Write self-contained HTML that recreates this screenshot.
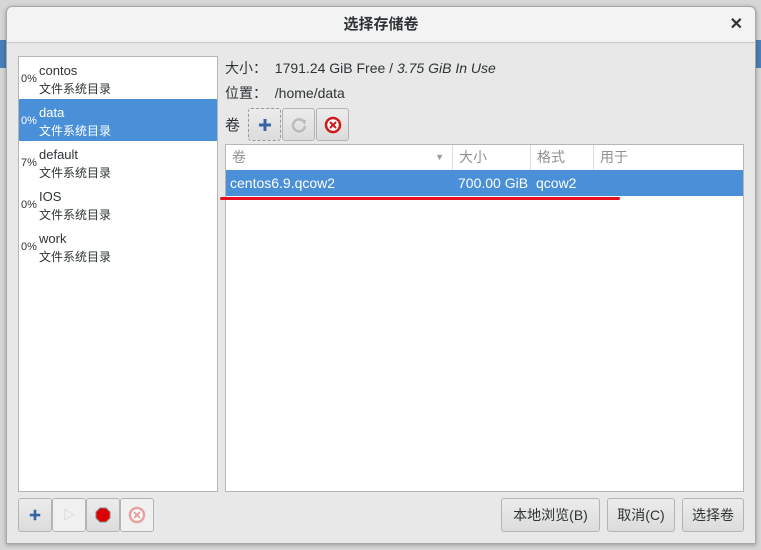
<!DOCTYPE html>
<html><head><meta charset="utf-8"><style>
*{margin:0;padding:0;box-sizing:border-box}
body{width:761px;height:550px;background:#d6d6d6;position:relative;overflow:hidden;font-family:"Liberation Sans","Noto Sans CJK SC",sans-serif;font-size:13px;color:#2e3436}
.abs{position:absolute}
.dlg{left:6px;top:6px;width:750px;height:538px;background:#e8e8e8;border:1px solid #a8a8a8;border-radius:6px 6px 0 0;box-shadow:0 1px 4px rgba(0,0,0,.3)}
.title{left:0;top:0;width:748px;height:36px;background:#f3f3f3;border-bottom:1px solid #c8c8c8;border-radius:6px 6px 0 0;text-align:center;line-height:36px;font-weight:bold;font-size:15px;color:#2e3436}
.list{background:#fff;border:1px solid #b6b6b6}
.row{position:absolute;left:0;width:198px;height:42px}
.row .p{position:absolute;left:2px;top:16px;font-size:11px}
.row .n{position:absolute;left:20px;top:6px;font-size:13px}
.row .d{position:absolute;left:20px;top:23px;font-size:12px}
.sel{background:#4a90d9;color:#fff}
.btn{position:absolute;border:1px solid #b4b4b4;border-radius:3px;background:linear-gradient(#ececec,#dcdcdc);text-align:center;line-height:32px;font-size:14px}
.hdr{position:absolute;top:0;height:25px;line-height:25px;color:#919191;font-size:14px;border-right:1px solid #dcdcdc;padding-left:6px}
</style></head><body>
<div class="abs" style="left:0;top:40px;width:6px;height:28px;background:#4a7fb8"></div>
<div class="abs" style="right:0;top:40px;width:6px;height:28px;background:#4a7fb8"></div>
<div class="abs dlg">
<div class="abs title">选择存储卷<span style="position:absolute;right:12px;top:0;font-size:16px">✕</span></div>
</div>
<div class="abs list" style="left:18px;top:56px;width:200px;height:436px">
<div class="row" style="top:0"><span class="p">0%</span><span class="n">contos</span><span class="d">文件系统目录</span></div>
<div class="row sel" style="top:42px"><span class="p">0%</span><span class="n">data</span><span class="d">文件系统目录</span></div>
<div class="row" style="top:84px"><span class="p">7%</span><span class="n">default</span><span class="d">文件系统目录</span></div>
<div class="row" style="top:126px"><span class="p">0%</span><span class="n">IOS</span><span class="d">文件系统目录</span></div>
<div class="row" style="top:168px"><span class="p">0%</span><span class="n">work</span><span class="d">文件系统目录</span></div>
</div>
<div class="abs" style="left:225px;top:58px;font-size:14px">大小：&nbsp; 1791.24 GiB Free / <i>3.75 GiB In Use</i></div>
<div class="abs" style="left:225px;top:83px;font-size:14px">位置：&nbsp; /home/data</div>
<div class="abs" style="left:225px;top:114px;font-size:15px">卷</div>
<div class="btn" style="left:248px;top:108px;width:33px;height:33px;border-style:dashed;border-color:#999"><svg width="16" height="16" viewBox="0 0 16 16" style="margin-top:8px"><path d="M8 2v12M2 8h12" stroke="#3565a4" stroke-width="3"/></svg></div>
<div class="btn" style="left:282px;top:108px;width:33px;height:33px"><svg width="18" height="18" viewBox="0 0 18 18" style="margin-top:7px"><path d="M14 6A6 6 0 1 0 15 10" stroke="#bbb" stroke-width="2.5" fill="none"/><path d="M11 4l5 0l-1 5z" fill="#bbb"/></svg></div>
<div class="btn" style="left:316px;top:108px;width:33px;height:33px"><svg width="18" height="18" viewBox="0 0 18 18" style="margin-top:7px"><circle cx="9" cy="9" r="7" fill="#fff" stroke="#d01919" stroke-width="2.5"/><path d="M6 6l6 6M12 6l-6 6" stroke="#d01919" stroke-width="2"/></svg></div>
<div class="abs list" style="left:225px;top:144px;width:519px;height:348px">
<div class="hdr" style="left:0;width:227px">卷<span style="position:absolute;right:8px;top:0;font-size:9px;color:#999">▼</span></div>
<div class="hdr" style="left:227px;width:78px">大小</div>
<div class="hdr" style="left:305px;width:63px">格式</div>
<div class="hdr" style="left:368px;width:150px;border:none">用于</div>
<div class="abs sel" style="left:0;top:25px;width:517px;height:26px;line-height:26px;font-size:14px"><span style="position:absolute;left:4px">centos6.9.qcow2</span><span style="position:absolute;left:232px">700.00 GiB</span><span style="position:absolute;left:310px">qcow2</span></div>
</div>
<div class="abs" style="left:220px;top:197px;width:400px;height:3px;background:#e8101c;border-radius:2px"></div>
<div class="btn" style="left:18px;top:498px;width:34px;height:34px"><svg width="14" height="14" viewBox="0 0 16 16" style="margin-top:9px"><path d="M8 2v12M2 8h12" stroke="#3565a4" stroke-width="3"/></svg></div>
<div class="btn" style="left:52px;top:498px;width:34px;height:34px;background:#f0f0f0;color:#ccc;font-size:12px">▷</div>
<div class="btn" style="left:86px;top:498px;width:34px;height:34px"><svg width="16" height="16" viewBox="0 0 16 16" style="margin-top:8px"><polygon points="5,1 11,1 15,5 15,11 11,15 5,15 1,11 1,5" fill="#d00" stroke="#888"/></svg></div>
<div class="btn" style="left:120px;top:498px;width:34px;height:34px;background:#f0f0f0"><svg width="18" height="18" viewBox="0 0 18 18" style="margin-top:7px"><circle cx="9" cy="9" r="7" fill="#fff" stroke="#e8a0a0" stroke-width="2.5"/><path d="M6 6l6 6M12 6l-6 6" stroke="#e8a0a0" stroke-width="2"/></svg></div>
<div class="btn" style="left:501px;top:498px;width:99px;height:34px">本地浏览(B)</div>
<div class="btn" style="left:607px;top:498px;width:68px;height:34px">取消(C)</div>
<div class="btn" style="left:682px;top:498px;width:62px;height:34px">选择卷</div>
</body></html>
